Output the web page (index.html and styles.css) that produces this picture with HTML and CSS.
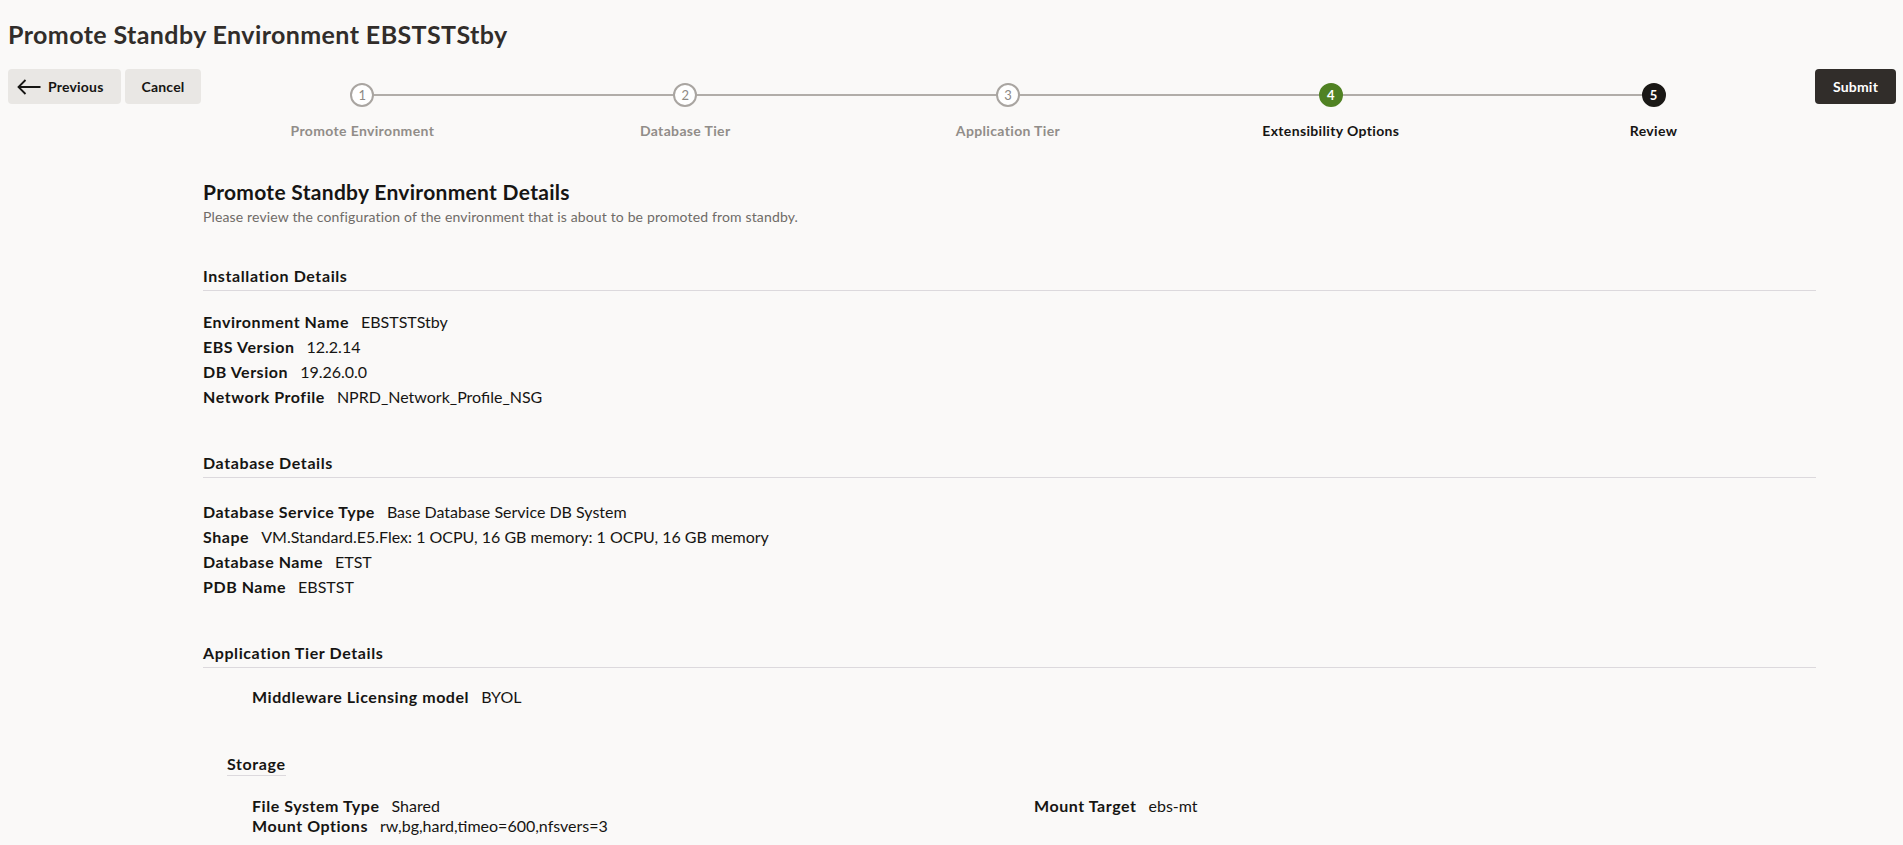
FILE: index.html
```html
<!DOCTYPE html>
<html lang="en">

<head>
    <meta charset="UTF-8">
    <meta name="viewport" content="width=device-width, initial-scale=1.0">
    <title>Promote Standby Environment</title>
    <link rel="stylesheet" href="styles.css">
</head>

<body>
    <div class="page">
        <h1 class="page-title">Promote Standby Environment EBSTSTStby</h1>

        <div class="train-bar">
            <div class="nav-left">
                <button class="btn btn-prev">
                    <svg class="arrow" viewBox="0 0 24 24" width="24" height="24">
                        <path d="M23.5 12H1.5 M8.5 5l-7 7 7 7" fill="none" stroke="#161513" stroke-width="1.8" />
                    </svg>
                    Previous
                </button>
                <button class="btn btn-cancel">Cancel</button>
            </div>

            <ol class="train">
                <li class="step"><span class="dot">1</span><span class="step-label">Promote Environment</span></li>
                <li class="step"><span class="dot">2</span><span class="step-label">Database Tier</span></li>
                <li class="step"><span class="dot">3</span><span class="step-label">Application Tier</span></li>
                <li class="step step-current"><span class="dot">4</span><span class="step-label">Extensibility Options</span></li>
                <li class="step step-next"><span class="dot">5</span><span class="step-label">Review</span></li>
            </ol>

            <div class="nav-right">
                <button class="btn btn-primary">Submit</button>
            </div>
        </div>

        <div class="content">
            <div class="intro">
                <h2>Promote Standby Environment Details</h2>
                <p>Please review the configuration of the environment that is about to be promoted from standby.</p>
            </div>

            <div class="section">
                <h3 class="section-title">Installation Details</h3>
                <div class="fields">
                    <div class="field"><span class="label">Environment Name</span><span class="value">EBSTSTStby</span></div>
                    <div class="field"><span class="label">EBS Version</span><span class="value">12.2.14</span></div>
                    <div class="field"><span class="label">DB Version</span><span class="value">19.26.0.0</span></div>
                    <div class="field"><span class="label">Network Profile</span><span class="value">NPRD_Network_Profile_NSG</span></div>
                </div>
            </div>

            <div class="section">
                <h3 class="section-title">Database Details</h3>
                <div class="fields fields-spaced">
                    <div class="field"><span class="label">Database Service Type</span><span class="value">Base Database Service DB System</span></div>
                    <div class="field"><span class="label">Shape</span><span class="value">VM.Standard.E5.Flex: 1 OCPU, 16 GB memory: 1 OCPU, 16 GB memory</span></div>
                    <div class="field"><span class="label">Database Name</span><span class="value">ETST</span></div>
                    <div class="field"><span class="label">PDB Name</span><span class="value">EBSTST</span></div>
                </div>
            </div>

            <div class="section">
                <h3 class="section-title">Application Tier Details</h3>
                <div class="fields fields-indent">
                    <div class="field"><span class="label">Middleware Licensing model</span><span class="value">BYOL</span></div>
                </div>

                <div class="subsection">
                    <h4 class="subsection-title">Storage</h4>
                    <div class="storage-grid">
                        <div>
                            <div class="field field-tight"><span class="label">File System Type</span><span class="value">Shared</span></div>
                            <div class="field field-tight"><span class="label">Mount Options</span><span class="value">rw,bg,hard,timeo=600,nfsvers=3</span></div>
                        </div>
                        <div>
                            <div class="field field-tight"><span class="label">Mount Target</span><span class="value">ebs-mt</span></div>
                        </div>
                    </div>
                </div>
            </div>
        </div>
    </div>
</body>

</html>
```

FILE: styles.css
```css
body {
    margin: 0;
    background-color: #faf9f8;
    color: #161513;
    font-family: Lato, "Noto Sans", sans-serif;
}

.page {
    padding: 19px 7px 0 8px;
}

.page-title {
    margin: 0;
    font-size: 25px;
    line-height: 30px;
    font-weight: 700;
    letter-spacing: 0.4px;
    color: #312d2a;
}

/* top bar: buttons + train */
.train-bar {
    display: flex;
    align-items: flex-start;
    margin-top: 20px;
}

.nav-left {
    display: flex;
    gap: 4px;
    width: 193px;
}

.nav-right {
    width: 81px;
}

.btn {
    display: inline-flex;
    align-items: center;
    justify-content: center;
    height: 35px;
    padding: 0 14px;
    border: 0;
    border-radius: 4px;
    background-color: #e9e7e4;
    color: #161513;
    font-family: Lato, "Noto Sans", sans-serif;
    font-size: 14px;
    font-weight: 700;
    letter-spacing: 0.2px;
}

.btn-prev {
    width: 113px;
    padding-left: 9px;
    justify-content: flex-start;
    gap: 7px;
}

.btn-cancel {
    width: 76px;
}

.btn-primary {
    width: 81px;
    background-color: #312d2a;
    color: #fff;
}

.train {
    flex: 1;
    display: flex;
    margin: 0;
    padding: 0;
    list-style: none;
}

.step {
    flex: 1;
    position: relative;
    display: flex;
    flex-direction: column;
    align-items: center;
}

.step:not(:last-child)::after {
    content: "";
    position: absolute;
    top: 25px;
    left: 50%;
    width: 100%;
    height: 2px;
    background-color: #b1ada9;
}

.dot {
    position: relative;
    z-index: 1;
    box-sizing: border-box;
    width: 24px;
    height: 24px;
    margin-top: 14px;
    border: 2px solid #a9a5a1;
    border-radius: 50%;
    background-color: #fff;
    color: #8d8985;
    font-size: 13px;
    line-height: 20px;
    text-align: center;
}

.step-label {
    margin-top: 15px;
    font-size: 14px;
    line-height: 18px;
    font-weight: 700;
    letter-spacing: 0.35px;
    color: #918d89;
}

.step-current .dot {
    border-color: #508223;
    background-color: #508223;
    color: #fff;
    font-weight: 700;
}

.step-next .dot {
    border-color: #1a1816;
    background-color: #1a1816;
    color: #fff;
    font-weight: 700;
}

.step-current .step-label,
.step-next .step-label {
    color: #161513;
}

/* review content */
.content {
    margin: 40px 80px 0 195px;
}

.intro h2 {
    margin: 0;
    font-size: 21px;
    line-height: 24px;
    font-weight: 700;
    letter-spacing: 0.3px;
}

.intro p {
    margin: 4px 0 0;
    font-size: 14px;
    line-height: 18px;
    letter-spacing: 0.15px;
    color: #6f6b67;
}

.section {
    margin-top: 44px;
}

.intro + .section {
    margin-top: 40px;
}

.section-title {
    margin: 0;
    padding-bottom: 4px;
    border-bottom: 1px solid #dcd9dd;
    font-size: 16px;
    line-height: 20px;
    font-weight: 700;
    letter-spacing: 0.6px;
}

.fields {
    margin-top: 18px;
}

.fields-spaced {
    margin-top: 21px;
}

.fields-indent {
    margin-top: 16px;
    padding-left: 49px;
}

.field {
    font-size: 16px;
    line-height: 25px;
}

.field-tight {
    line-height: 20px;
}

.label {
    font-weight: 700;
    letter-spacing: 0.55px;
}

.value {
    margin-left: 12px;
}

.subsection {
    margin: 45px 0 0 24px;
}

.subsection-title {
    display: inline-block;
    margin: 0;
    padding-bottom: 1px;
    border-bottom: 1px solid #dcd9dd;
    font-size: 16px;
    line-height: 20px;
    font-weight: 700;
    letter-spacing: 0.6px;
}

.storage-grid {
    display: grid;
    grid-template-columns: 1fr 1fr;
    margin-top: 20px;
    padding-left: 25px;
}
```
